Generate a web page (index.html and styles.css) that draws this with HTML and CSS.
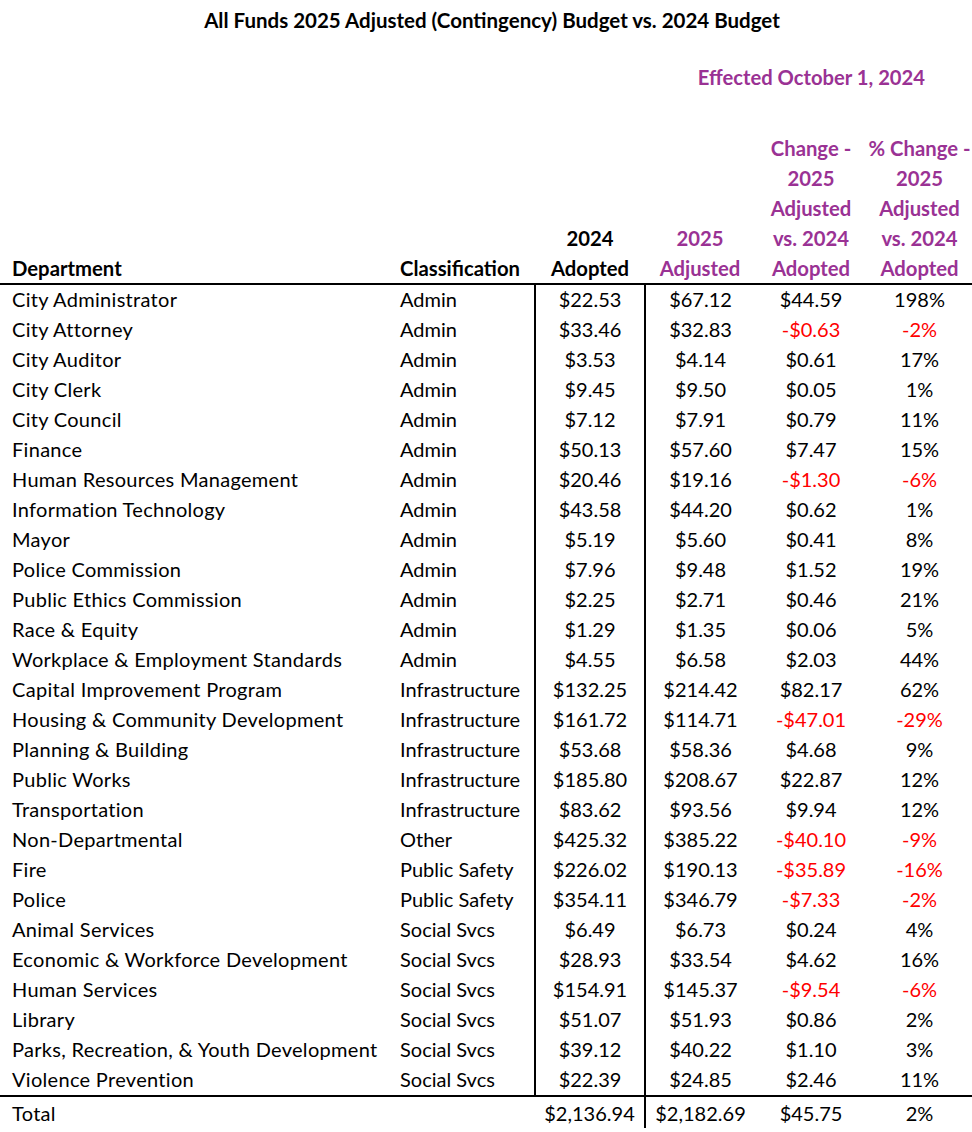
FILE: index.html
```html
<!DOCTYPE html>
<html lang="en">
<head>
<meta charset="utf-8">
<title>All Funds 2025 Adjusted (Contingency) Budget vs. 2024 Budget</title>
<link rel="stylesheet" href="styles.css">
</head>
<body>
<div class="page">
  <h1 class="title">All Funds 2025 Adjusted (Contingency) Budget vs. 2024 Budget</h1>
  <p class="subtitle">Effected October 1, 2024</p>
  <table class="budget">
    <colgroup>
      <col class="c-dept"><col class="c-class"><col class="c-num"><col class="c-num"><col class="c-chg"><col class="c-pct">
    </colgroup>
    <thead>
      <tr>
        <th class="left">Department</th>
        <th class="left">Classification</th>
        <th class="num">2024<br>Adopted</th>
        <th class="num purple">2025<br>Adjusted</th>
        <th class="num purple">Change -<br>2025<br>Adjusted<br>vs. 2024<br>Adopted</th>
        <th class="num purple">% Change -<br>2025<br>Adjusted<br>vs. 2024<br>Adopted</th>
      </tr>
    </thead>
    <tbody>
      <tr><td>City Administrator</td><td>Admin</td><td class="num vl">$22.53</td><td class="num vl">$67.12</td><td class="num">$44.59</td><td class="num">198%</td></tr>
      <tr><td>City Attorney</td><td>Admin</td><td class="num vl">$33.46</td><td class="num vl">$32.83</td><td class="num neg">-$0.63</td><td class="num neg">-2%</td></tr>
      <tr><td>City Auditor</td><td>Admin</td><td class="num vl">$3.53</td><td class="num vl">$4.14</td><td class="num">$0.61</td><td class="num">17%</td></tr>
      <tr><td>City Clerk</td><td>Admin</td><td class="num vl">$9.45</td><td class="num vl">$9.50</td><td class="num">$0.05</td><td class="num">1%</td></tr>
      <tr><td>City Council</td><td>Admin</td><td class="num vl">$7.12</td><td class="num vl">$7.91</td><td class="num">$0.79</td><td class="num">11%</td></tr>
      <tr><td>Finance</td><td>Admin</td><td class="num vl">$50.13</td><td class="num vl">$57.60</td><td class="num">$7.47</td><td class="num">15%</td></tr>
      <tr><td>Human Resources Management</td><td>Admin</td><td class="num vl">$20.46</td><td class="num vl">$19.16</td><td class="num neg">-$1.30</td><td class="num neg">-6%</td></tr>
      <tr><td>Information Technology</td><td>Admin</td><td class="num vl">$43.58</td><td class="num vl">$44.20</td><td class="num">$0.62</td><td class="num">1%</td></tr>
      <tr><td>Mayor</td><td>Admin</td><td class="num vl">$5.19</td><td class="num vl">$5.60</td><td class="num">$0.41</td><td class="num">8%</td></tr>
      <tr><td>Police Commission</td><td>Admin</td><td class="num vl">$7.96</td><td class="num vl">$9.48</td><td class="num">$1.52</td><td class="num">19%</td></tr>
      <tr><td>Public Ethics Commission</td><td>Admin</td><td class="num vl">$2.25</td><td class="num vl">$2.71</td><td class="num">$0.46</td><td class="num">21%</td></tr>
      <tr><td>Race &amp; Equity</td><td>Admin</td><td class="num vl">$1.29</td><td class="num vl">$1.35</td><td class="num">$0.06</td><td class="num">5%</td></tr>
      <tr><td>Workplace &amp; Employment Standards</td><td>Admin</td><td class="num vl">$4.55</td><td class="num vl">$6.58</td><td class="num">$2.03</td><td class="num">44%</td></tr>
      <tr><td>Capital Improvement Program</td><td>Infrastructure</td><td class="num vl">$132.25</td><td class="num vl">$214.42</td><td class="num">$82.17</td><td class="num">62%</td></tr>
      <tr><td>Housing &amp; Community Development</td><td>Infrastructure</td><td class="num vl">$161.72</td><td class="num vl">$114.71</td><td class="num neg">-$47.01</td><td class="num neg">-29%</td></tr>
      <tr><td>Planning &amp; Building</td><td>Infrastructure</td><td class="num vl">$53.68</td><td class="num vl">$58.36</td><td class="num">$4.68</td><td class="num">9%</td></tr>
      <tr><td>Public Works</td><td>Infrastructure</td><td class="num vl">$185.80</td><td class="num vl">$208.67</td><td class="num">$22.87</td><td class="num">12%</td></tr>
      <tr><td>Transportation</td><td>Infrastructure</td><td class="num vl">$83.62</td><td class="num vl">$93.56</td><td class="num">$9.94</td><td class="num">12%</td></tr>
      <tr><td>Non-Departmental</td><td>Other</td><td class="num vl">$425.32</td><td class="num vl">$385.22</td><td class="num neg">-$40.10</td><td class="num neg">-9%</td></tr>
      <tr><td>Fire</td><td>Public Safety</td><td class="num vl">$226.02</td><td class="num vl">$190.13</td><td class="num neg">-$35.89</td><td class="num neg">-16%</td></tr>
      <tr><td>Police</td><td>Public Safety</td><td class="num vl">$354.11</td><td class="num vl">$346.79</td><td class="num neg">-$7.33</td><td class="num neg">-2%</td></tr>
      <tr><td>Animal Services</td><td>Social Svcs</td><td class="num vl">$6.49</td><td class="num vl">$6.73</td><td class="num">$0.24</td><td class="num">4%</td></tr>
      <tr><td>Economic &amp; Workforce Development</td><td>Social Svcs</td><td class="num vl">$28.93</td><td class="num vl">$33.54</td><td class="num">$4.62</td><td class="num">16%</td></tr>
      <tr><td>Human Services</td><td>Social Svcs</td><td class="num vl">$154.91</td><td class="num vl">$145.37</td><td class="num neg">-$9.54</td><td class="num neg">-6%</td></tr>
      <tr><td>Library</td><td>Social Svcs</td><td class="num vl">$51.07</td><td class="num vl">$51.93</td><td class="num">$0.86</td><td class="num">2%</td></tr>
      <tr><td>Parks, Recreation, &amp; Youth Development</td><td>Social Svcs</td><td class="num vl">$39.12</td><td class="num vl">$40.22</td><td class="num">$1.10</td><td class="num">3%</td></tr>
      <tr><td>Violence Prevention</td><td>Social Svcs</td><td class="num vl">$22.39</td><td class="num vl">$24.85</td><td class="num">$2.46</td><td class="num">11%</td></tr>
    </tbody>
    <tfoot>
      <tr><td>Total</td><td></td><td class="num">$2,136.94</td><td class="num vl">$2,182.69</td><td class="num">$45.75</td><td class="num">2%</td></tr>
    </tfoot>
  </table>
</div>
</body>
</html>
```

FILE: styles.css
```css
html, body {
  margin: 0;
  padding: 0;
  background: #ffffff;
}

.page {
  width: 972px;
  font-family: "Lato", "Liberation Sans", sans-serif;
  color: #000000;
}

.title {
  margin: 0;
  padding: 5px 0 0 12px;
  height: 35px;
  box-sizing: border-box;
  font-size: 20.5px;
  line-height: 30px;
  font-weight: 700;
  text-align: center;
}

.subtitle {
  margin: 27px 0 0 0;
  padding-right: 47px;
  font-size: 20.2px;
  line-height: 30px;
  font-weight: 700;
  text-align: right;
  color: #9a3294;
}

.budget {
  margin-top: 41px;
  width: 972px;
  table-layout: fixed;
  border-collapse: collapse;
  font-size: 20px;
}

.c-dept { width: 400px; }
.c-class { width: 135px; }
.c-num { width: 110px; }
.c-chg { width: 112px; }
.c-pct { width: 105px; }

.budget th,
.budget td {
  padding: 0;
  height: 30px;
  line-height: 30px;
  white-space: nowrap;
  font-weight: 400;
}

.budget th {
  font-weight: 700;
  font-size: 20.3px;
  vertical-align: bottom;
  text-align: center;
}

.budget thead tr {
  border-bottom: 2px solid #000;
}

.budget tbody td {
  padding-bottom: 1px;
  height: 29px;
  line-height: 29px;
}

.budget td:first-child,
.budget th:first-child {
  padding-left: 12px;
}

.budget tbody td:first-child,
.budget tfoot td:first-child {
  letter-spacing: 0.3px;
}

.budget .left {
  text-align: left;
}

.budget .num {
  text-align: center;
}

.budget .vl {
  border-left: 2px solid #000;
}

.budget .purple {
  color: #9a3294;
}

.budget .neg {
  color: #ff0000;
}

.budget tfoot tr {
  border-top: 2px solid #000;
}

.budget tfoot td {
  height: 31px;
}
```
